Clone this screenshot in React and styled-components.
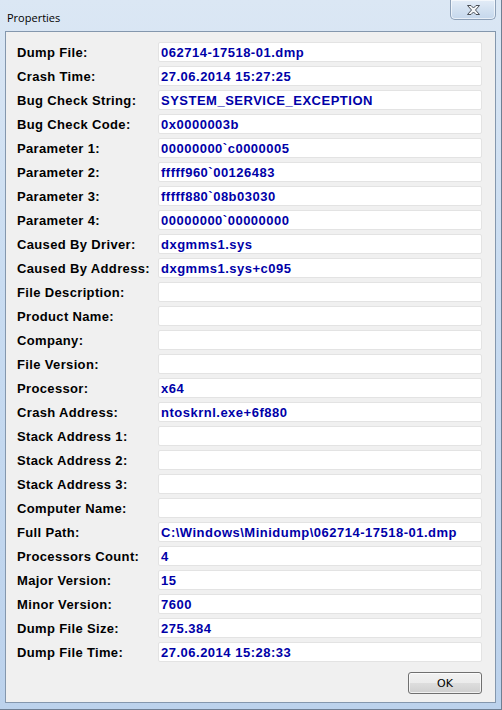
import React from "react";
import styled, { createGlobalStyle } from "styled-components";

const GlobalStyles = createGlobalStyle`
  html, body {
    margin: 0;
    padding: 0;
    background: #ffffff;
  }
`;

const rows = [
  ["Dump File:", "062714-17518-01.dmp"],
  ["Crash Time:", "27.06.2014 15:27:25"],
  ["Bug Check String:", "SYSTEM_SERVICE_EXCEPTION"],
  ["Bug Check Code:", "0x0000003b"],
  ["Parameter 1:", "00000000`c0000005"],
  ["Parameter 2:", "fffff960`00126483"],
  ["Parameter 3:", "fffff880`08b03030"],
  ["Parameter 4:", "00000000`00000000"],
  ["Caused By Driver:", "dxgmms1.sys"],
  ["Caused By Address:", "dxgmms1.sys+c095"],
  ["File Description:", ""],
  ["Product Name:", ""],
  ["Company:", ""],
  ["File Version:", ""],
  ["Processor:", "x64"],
  ["Crash Address:", "ntoskrnl.exe+6f880"],
  ["Stack Address 1:", ""],
  ["Stack Address 2:", ""],
  ["Stack Address 3:", ""],
  ["Computer Name:", ""],
  ["Full Path:", "C:\\Windows\\Minidump\\062714-17518-01.dmp"],
  ["Processors Count:", "4"],
  ["Major Version:", "15"],
  ["Minor Version:", "7600"],
  ["Dump File Size:", "275.384"],
  ["Dump File Time:", "27.06.2014 15:28:33"],
];

function CloseGlyph() {
  return (
    <svg width="15" height="12" viewBox="0 0 15 12">
      <path
        d="M1.5 1.5 H5 L7.5 4 L10 1.5 H13.5 L9.5 6 L13.5 10.5 H10 L7.5 8 L5 10.5 H1.5 L5.5 6 Z"
        fill="#f4f6f8"
        stroke="#4a4f57"
        strokeWidth="1"
        strokeLinejoin="round"
      />
    </svg>
  );
}

export default function App() {
  return (
    <>
      <GlobalStyles />
      <Window>
        <TitleBar>
          <Title>Properties</Title>
          <CloseButton>
            <CloseGlyph />
          </CloseButton>
        </TitleBar>
        <Client>
          <Fields>
            {rows.map(([label, value]) => (
              <Row key={label}>
                <Label>{label}</Label>
                <Field>{value}</Field>
              </Row>
            ))}
          </Fields>
          <Footer>
            <OkButton>OK</OkButton>
          </Footer>
        </Client>
      </Window>
    </>
  );
}

const Window = styled.div`
  width: 502px;
  height: 710px;
  box-sizing: border-box;
  display: flex;
  flex-direction: column;
  padding: 0 5px 6px 5px;
  background: linear-gradient(to bottom, #dbe7f4 0%, #c9dcf1 40%, #bcd2ec 100%);
  border-right: 1px solid #6f7f93;
  border-bottom: 1px solid #6f7f93;
`;

const TitleBar = styled.div`
  height: 31px;
  display: flex;
  justify-content: space-between;
  align-items: flex-start;
  flex-shrink: 0;
`;

const Title = styled.div`
  font-family: "Open Sans", "DejaVu Sans", sans-serif;
  font-size: 11px;
  color: #000;
  padding: 10px 0 0 2px;
`;

const CloseButton = styled.div`
  width: 46px;
  height: 20px;
  margin-right: 0;
  box-sizing: border-box;
  display: flex;
  align-items: center;
  justify-content: center;
  border: 1px solid #8da0b8;
  border-top: none;
  border-radius: 0 0 5px 5px;
  background: linear-gradient(to bottom, #e3ecf7 0%, #d3e1f1 50%, #c5d7ec 100%);
  box-shadow: inset 0 0 0 1px rgba(255, 255, 255, 0.6);
`;

const Client = styled.div`
  flex: 1;
  display: flex;
  flex-direction: column;
  background: #f0f0f0;
  border: 1px solid #8497ad;
  padding: 10px 13px 8px 11px;
`;

const Fields = styled.div`
  display: flex;
  flex-direction: column;
  gap: 4px;
`;

const Row = styled.div`
  display: flex;
  align-items: center;
  height: 20px;
`;

const Label = styled.div`
  width: 141px;
  flex-shrink: 0;
  padding-top: 1px;
  font-family: "Liberation Sans", Arial, sans-serif;
  font-weight: bold;
  font-size: 13px;
  letter-spacing: 0.35px;
  color: #000;
  white-space: nowrap;
`;

const Field = styled.div`
  flex: 1;
  height: 20px;
  box-sizing: border-box;
  background: #fff;
  border: 1px solid #e3e3e3;
  border-radius: 2px;
  padding: 1px 2px 0;
  display: flex;
  align-items: center;
  font-family: "Liberation Sans", Arial, sans-serif;
  font-weight: bold;
  font-size: 13px;
  letter-spacing: 0.5px;
  color: #0000a8;
  white-space: nowrap;
  overflow: hidden;
`;

const Footer = styled.div`
  display: flex;
  justify-content: flex-end;
  margin-top: 10px;
`;

const OkButton = styled.button`
  width: 74px;
  height: 22px;
  border: 1px solid #707070;
  border-radius: 3px;
  background: linear-gradient(to bottom, #f2f2f2 0%, #ebebeb 50%, #dddddd 51%, #cfcfcf 100%);
  box-shadow: inset 0 0 0 1px rgba(255, 255, 255, 0.7);
  font-family: "DejaVu Sans", sans-serif;
  font-size: 11px;
  color: #000;
  padding: 0;
`;
